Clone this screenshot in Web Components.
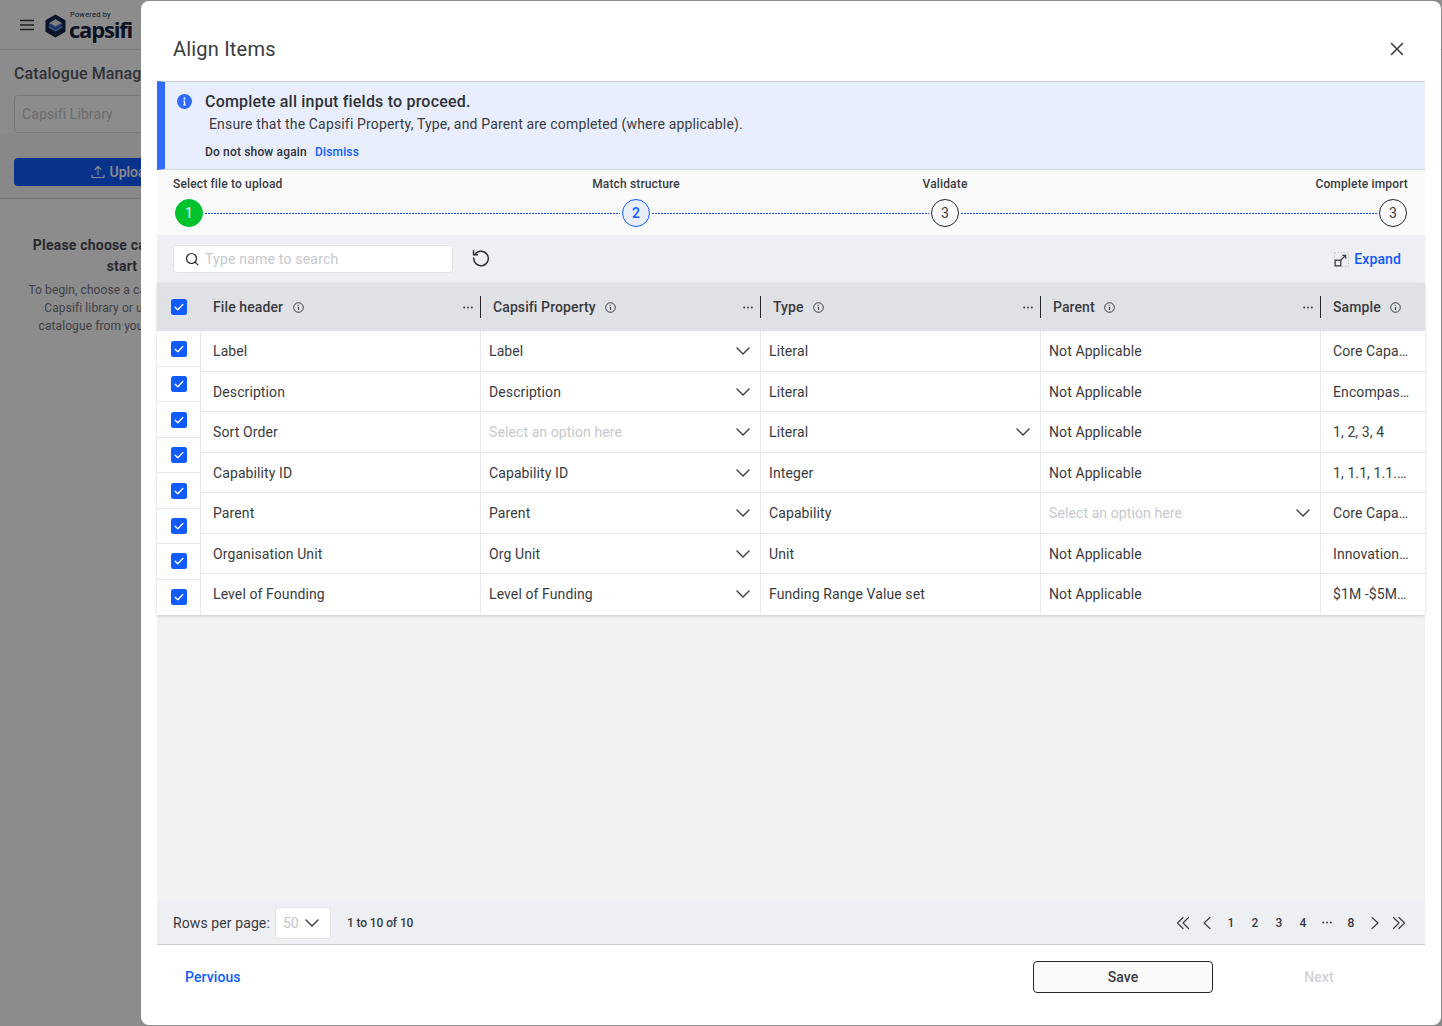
<!DOCTYPE html>
<html lang="en">
<head>
<meta charset="utf-8">
<title>Align Items</title>
<style>
html,body{margin:0;padding:0;height:100%;background:#fff}
body{font-family:Roboto,"Liberation Sans",sans-serif;color:#393b41;overflow:hidden;width:1442px;height:1026px;position:relative}
</style>
</head>
<body>
<app-backdrop></app-backdrop>
<modal-overlay>
  <dialog-head title-text="Align Items"></dialog-head>
  <info-banner></info-banner>
  <import-stepper></import-stepper>
  <grid-toolbar></grid-toolbar>
  <align-grid></align-grid>
  <grid-pager></grid-pager>
  <dialog-foot></dialog-foot>
</modal-overlay>
<script>
const chev='<svg width="14" height="8" viewBox="0 0 14 8" fill="none" stroke="currentColor" stroke-width="1.4" stroke-linecap="round" stroke-linejoin="round"><path d="M1 1l6 6 6-6"/></svg>';
const infoSm='<svg width="11" height="11" viewBox="0 0 11 11" fill="none" stroke="currentColor"><circle cx="5.5" cy="5.5" r="4.8"/><path d="M5.5 5v3M4.7 3.2h1" stroke-width="1.1"/></svg>';
const check='<svg width="16" height="16" viewBox="0 0 16 16"><rect width="16" height="16" rx="2.5" fill="#0f5bff"/><path d="M4.2 8.2l2.6 2.5 5-5.2" fill="none" stroke="#fff" stroke-width="1.4" stroke-linecap="round" stroke-linejoin="round"/></svg>';
const dots='<svg width="10" height="3" viewBox="0 0 10 3" fill="#393b41"><circle cx="1.200" cy="1.500" r=".95"/><circle cx="5" cy="1.500" r=".95"/><circle cx="8.800" cy="1.500" r=".95"/></svg>';

function define(name,html,init){
  customElements.define(name,class extends HTMLElement{
    connectedCallback(){
      if(this.shadowRoot)return;
      const r=this.attachShadow({mode:'open'});
      r.innerHTML=typeof html==='function'?html(this):html;
      if(init)init(r,this);
    }
  });
}

define('app-backdrop',`<style>
:host{display:block;position:absolute;inset:0;background:#fff;color:#393b41;overflow:hidden}
.bar{height:49px;display:flex;align-items:center;gap:11px;padding-left:20px;border-bottom:1px solid #dcdcdc;box-sizing:content-box}
.logo{display:flex;align-items:center;gap:3px;position:relative;margin-top:2px}
.pw{position:absolute;left:25px;top:-2px;font-size:7.500px;line-height:8px;color:#2a2d36;letter-spacing:.2px;white-space:nowrap}
.cap{font:700 22px/18px "Open Sans",sans-serif;letter-spacing:-1.200px;color:#17233f;margin-top:7px}
.side{width:244px}
h2{margin:0;font-size:16px;font-weight:500;line-height:20px;padding:14px 14px 0;white-space:nowrap;color:#5a5c64;letter-spacing:.1px}
.fld{margin:11px 14px 0;height:38px;box-sizing:border-box;border:1px solid #d8d9de;border-radius:4px;font-size:14px;line-height:36px;padding-left:7px;color:#c3c5cb;letter-spacing:.1px}
.up{padding:25px 14px 12px;background:#f7f7f8;border-bottom:1px solid #d5d6da}
.btn{height:28px;border-radius:4px;background:#0f5bff;color:#fff;font-size:14px;font-weight:500;display:flex;align-items:center;justify-content:center;gap:5px}
.msg{text-align:center;padding:36px 0 0}
.t{font-size:14px;font-weight:700;line-height:21px;color:#4b4d55;white-space:nowrap;letter-spacing:.2px}
.d{margin-top:4px;font-size:12px;line-height:18px;color:#75777f;white-space:nowrap;letter-spacing:.1px}
</style>
<div class="bar">
  <svg width="14" height="12" viewBox="0 0 14 12" stroke="#393b41" stroke-width="1.3"><path d="M0 1.5h14M0 6h14M0 10.500h14"/></svg>
  <div class="logo">
    <svg width="21" height="24" viewBox="0 0 22 24"><path d="M11 0l10.500 6v12L11 24 .5 18V6z" fill="#14234a"/><path d="M11 5l7 4-7 4-7-4z" fill="#fff" opacity=".9"/><path d="M4 11.500l7 4 7-4v2.500l-7 4-7-4z" fill="#5f8de0"/><path d="M6 9.500l5 3 5-3 2 1.500-7 4-7-4z" fill="#3f6fd0"/></svg>
    <span class="pw">Powered by</span><span class="cap">capsifi</span>
  </div>
</div>
<div class="side">
  <h2>Catalogue Management</h2>
  <div class="fld">Capsifi Library</div>
  <div class="up" style="margin-top:0"><div class="btn"><svg width="14" height="14" viewBox="0 0 14 14" fill="none" stroke="#fff" stroke-width="1.1" stroke-linecap="round" stroke-linejoin="round"><path d="M7 9.500V1.500M4 4.500l3-3 3 3M1 10v2.500h12V10"/></svg>Upload</div></div>
  <div class="msg"><div class="t">Please choose catalogue to<br>start</div>
  <div class="d">To begin, choose a catalogue from<br>Capsifi library or upload your<br>catalogue from your computer.</div></div>
</div>`);

define('modal-overlay',`<style>
:host{display:block;position:absolute;inset:0;background:rgba(0,0,0,.45)}
.m{position:absolute;left:141px;top:1px;right:1px;bottom:1px;background:#fff;border-radius:8px;padding:0 16px;display:flex;flex-direction:column;overflow:hidden}
</style><div class="m"><slot></slot></div>`);

define('dialog-head',h=>`<style>
:host{display:flex;align-items:center;justify-content:space-between;height:80px;padding:16px 21px 0 16px;flex:none;box-sizing:border-box}
.t{font-size:20px;line-height:24px;color:#393b41;letter-spacing:.2px}
svg{display:block}
</style><div class="t">${h.getAttribute('title-text')}</div>
<svg width="14" height="14" viewBox="0 0 14 14" stroke="#393b41" stroke-width="1.6" stroke-linecap="round"><path d="M1.500 1.500l11 11M12.500 1.500l-11 11"/></svg>`);

define('info-banner',`<style>
:host{display:flex;flex:none;box-sizing:border-box;height:89px;background:#e8eefe;border-top:1px solid #c9ccd6;border-bottom:1px solid #d5d6da;border-left:8px solid #2f6bff;padding:10px 0 0 12px;gap:13px}
svg{display:block;margin-top:2px;flex:none}
.h{font-size:16px;font-weight:500;line-height:19px;color:#2f3137;letter-spacing:.2px}
.p{font-size:14px;line-height:17px;margin:5px 0 0 4px;color:#393b41;letter-spacing:.16px}
.l{font-size:12px;line-height:15px;margin-top:12px;font-weight:500;color:#2f3137;letter-spacing:.16px}
.l span{color:#0f5bff;margin-left:5px}
</style>
<svg width="15" height="15" viewBox="0 0 15 15"><circle cx="7.500" cy="7.500" r="7.500" fill="#2f6bff"/><path d="M7.500 6.800v4M6.300 6.900h1.200M6.300 10.800h2.400" stroke="#fff" stroke-width="1.300" fill="none"/><circle cx="7.500" cy="4.400" r="1" fill="#fff"/></svg>
<div><div class="h">Complete all input fields to proceed.</div>
<div class="p">Ensure that the Capsifi Property, Type, and Parent are completed (where applicable).</div>
<div class="l">Do not show again <span>Dismiss</span></div></div>`);

define('import-stepper',`<style>
:host{display:grid;flex:none;box-sizing:border-box;height:65px;background:#fafafa;padding:7px 16px 0 16px;grid-template-columns:30px 419fr 28px 281fr 28px 420fr 30px;grid-template-rows:14px 28px;row-gap:8px;align-items:center}
.lb{grid-row:1;font-size:12px;font-weight:500;line-height:14px;color:#393b41;white-space:nowrap;width:max-content;justify-self:center;letter-spacing:.15px}
.c{grid-row:2;width:28px;height:28px;box-sizing:border-box;border-radius:50%;border:1px solid #24262b;display:flex;align-items:center;justify-content:center;font-size:14px;color:#393b41;justify-self:center}
.g{background:#00c22d;border-color:#00c22d;color:#fff;justify-self:end}
.b{background:#e8eefe;border-color:#0f5bff;color:#0f5bff;font-weight:500}
.last{justify-self:start}
.ln{grid-row:2;height:1px;margin:0 2px;background:repeating-linear-gradient(90deg,#1f4dff 0 2px,transparent 2px 3px)}
</style>
<div class="lb" style="grid-column:1;justify-self:start">Select file to upload</div>
<div class="lb" style="grid-column:3">Match structure</div>
<div class="lb" style="grid-column:5">Validate</div>
<div class="lb" style="grid-column:7;justify-self:end;margin-right:1px">Complete import</div>
<div class="c g" style="grid-column:1">1</div><div class="ln" style="grid-column:2"></div>
<div class="c b" style="grid-column:3">2</div><div class="ln" style="grid-column:4"></div>
<div class="c" style="grid-column:5">3</div><div class="ln" style="grid-column:6"></div>
<div class="c last" style="grid-column:7">3</div>`);

define('grid-toolbar',`<style>
:host{display:flex;flex:none;align-items:center;box-sizing:border-box;height:48px;background:#eeeff2;padding:0 24px 0 16px}
.s{width:280px;height:28px;box-sizing:border-box;background:#fff;border:1px solid #e3e4e8;border-radius:4px;display:flex;align-items:center;gap:6px;padding-left:11px;font-size:14px;color:#c6c8ce;letter-spacing:.2px}
svg{display:block;flex:none}
.r{margin:-2px 0 0 19px}
.e{margin-left:auto;display:flex;align-items:center;gap:5px;color:#0f5bff;font-size:14px;font-weight:500;letter-spacing:.1px}
</style>
<div class="s"><svg width="14" height="14" viewBox="0 0 14 14" fill="none" stroke="#24262b" stroke-width="1.200" stroke-linecap="round"><circle cx="6.500" cy="6.500" r="5"/><path d="M10.200 10.200l2.600 2.600"/></svg>Type name to search</div>
<svg class="r" width="18" height="18" viewBox="0 0 18 18" fill="none" stroke="#2f3137" stroke-width="1.500" stroke-linecap="round" stroke-linejoin="round"><path d="M2.800 5.600A7.300 7.300 0 1 1 1.700 9"/><path d="M1.500 1.800v4h4"/></svg>
<div class="e"><svg width="15" height="15" viewBox="0 0 15 15" fill="none"><rect x=".5" y=".5" width="14" height="14" stroke="#c4c6cc" stroke-dasharray="1.500 1.500"/><rect x="1.200" y="8.200" width="5.600" height="5.600" fill="#eeeff2" stroke="#4b4d55" stroke-width="1.400"/><path d="M6.800 8.200l4.700-4.700M8.300 3.300h3.400v3.400" stroke="#393b41" stroke-width="1.200"/></svg>Expand</div>`);

define('align-grid',()=>{
  const heads=['File header','Capsifi Property','Type','Parent','Sample'];
  const rows=[
   ['Label',['Label',1],['Literal',0],['Not Applicable',0],'Core Capa…'],
   ['Description',['Description',1],['Literal',0],['Not Applicable',0],'Encompas…'],
   ['Sort Order',['Select an option here',2],['Literal',1],['Not Applicable',0],'1, 2, 3, 4'],
   ['Capability ID',['Capability ID',1],['Integer',0],['Not Applicable',0],'1, 1.1, 1.1.…'],
   ['Parent',['Parent',1],['Capability',0],['Select an option here',2],'Core Capa…'],
   ['Organisation Unit',['Org Unit',1],['Unit',0],['Not Applicable',0],'Innovation…'],
   ['Level of Founding',['Level of Funding',1],['Funding Range Value set',0],['Not Applicable',0],'$1M -$5M…']
  ];
  const hd=heads.map((h,i)=>`<div class="hc"><span class="ht">${h}</span>${infoSm}${i<4?`<span class="dots">${dots}</span><i class="sep"></i>`:''}</div>`).join('');
  const sel=c=>`<div class="cell sel"><span class="${c[1]==2?'ph':''}">${c[0]}</span>${c[1]?`<span class="ch">${chev}</span>`:''}</div>`;
  const bd=rows.map(r=>`<div class="row"><div class="cell first">${r[0]}</div>${sel(r[1])}${sel(r[2])}${sel(r[3])}<div class="cell last">${r[4]}</div></div>`).join('');
  return `<style>
:host{display:block;flex:1;min-height:0;background:#f2f2f2}
.tb{box-shadow:0 1px 3px rgba(0,0,0,.18);background:#fff}
.hr,.row{display:grid;grid-template-columns:280px 280px 280px 280px 104px}
.hw{display:grid;grid-template-columns:44px 1fr;background:#e0e1e5;height:48px}
.hc{position:relative;display:flex;align-items:center;gap:9.500px;padding-left:12px;font-size:14px;font-weight:500;color:#393b41;height:48px;letter-spacing:.1px}
.hc svg{display:block;color:#393b41}
.dots{position:absolute;right:8px;top:22.500px}
.sep{position:absolute;right:0;top:13px;height:22px;width:1px;background:#24262b}
.ck{display:flex;align-items:center;padding-left:14px}
svg{display:block}
.bw{display:grid;grid-template-columns:44px 1fr;height:283.500px;padding-top:.4px}
.lc{display:flex;flex-direction:column;border-right:1px solid #e6e7ea;margin-top:.15px;margin-bottom:-.15px}
.lc .ck{flex:1;border-bottom:1px solid #e6e7ea}
.lc .ck:last-child{border-bottom-color:transparent}
.row{height:40.500px;box-sizing:border-box;border-bottom:1px solid #e3e4e8}
.row:last-child{border-bottom-color:transparent}
.cell{display:flex;align-items:center;font-size:14px;color:#393b41;white-space:nowrap;border-right:1px solid #e9eaed;box-sizing:border-box;min-width:0;letter-spacing:.1px}
.first{padding-left:12px}
.sel{padding:0 10px 0 8px;justify-content:space-between}
.last{padding-left:12px;border-right:0;overflow:hidden}
.ph{color:#c6c8ce}
.ch{color:#393b41}
</style>
<div class="tb">
<div class="hw"><div class="ck">${check}</div><div class="hr">${hd}</div></div>
<div class="bw"><div class="lc">${Array(8).fill(`<div class="ck">${check}</div>`).join('')}</div><div>${bd}</div></div>
</div>`;
});

define('grid-pager',()=>{
 const a=p=>`<svg width="14" height="14" viewBox="0 0 14 14" fill="none" stroke="#393b41" stroke-width="1.200" stroke-linecap="round" stroke-linejoin="round"><path d="${p}"/></svg>`;
 const items=[a('M7 1.500L1.500 7 7 12.500M12.500 1.500L7 7l5.500 5.500'),a('M10 1.500L4 7l6 5.500'),'1','2','3','4',dots,'8',a('M4 1.500L10 7l-6 5.500'),a('M7 1.500L12.500 7 7 12.500M1.500 1.500L7 7l-5.500 5.500')];
 return `<style>
:host{display:flex;flex:none;align-items:center;box-sizing:border-box;height:45px;background:#eeeff2;border-bottom:1px solid #c9ccd1;padding:1px 14px 0 16px;font-size:14px;color:#393b41}
.lbl{letter-spacing:.1px}
.sl{margin-left:5px;width:56px;height:32px;box-sizing:border-box;background:#fff;border:1px solid #e3e4e8;border-radius:4px;display:flex;align-items:center;justify-content:space-between;padding:0 11px 0 7px;color:#c6c8ce}
.sl svg{color:#393b41}
.ct{margin-left:16px;font-size:12px;font-weight:500;letter-spacing:-.1px}
.p{margin-left:auto;display:flex}
.p div{width:24px;display:flex;justify-content:center;align-items:center;font-size:12px;font-weight:500;height:20px}
svg{display:block}
</style>
<span class="lbl">Rows per page:</span><div class="sl">50${chev}</div><span class="ct">1 to 10 of 10</span>
<div class="p">${items.map(i=>`<div>${i}</div>`).join('')}</div>`;
});

define('dialog-foot',`<style>
:host{display:flex;flex:none;align-items:center;box-sizing:border-box;height:64px;padding:0 0 0 28px;font-size:14px;font-weight:500;margin-bottom:16px;letter-spacing:.1px}
.pv{color:#0f5bff}
.sv{margin-left:auto;width:180px;height:32px;box-sizing:border-box;border:1px solid #24262b;border-radius:4px;background:#fafafa;display:flex;align-items:center;justify-content:center;color:#393b41}
.nx{width:212px;text-align:center;color:#d0d1d6}
</style><span class="pv">Pervious</span><div class="sv">Save</div><div class="nx">Next</div>`);
</script>
</body>
</html>
